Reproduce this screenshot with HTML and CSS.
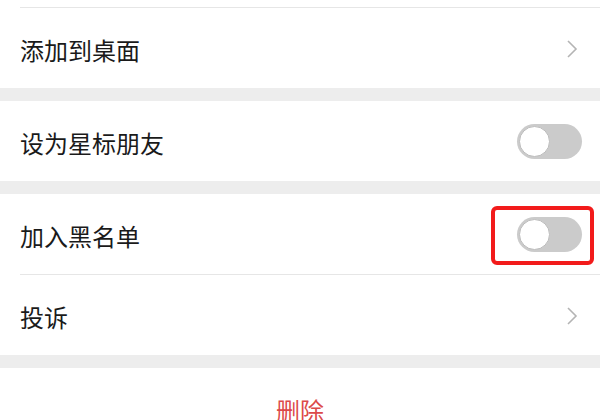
FILE: index.html
```html
<!DOCTYPE html>
<html lang="zh-CN">
<head>
    <meta charset="UTF-8">
    <meta name="viewport" content="width=device-width, initial-scale=1.0">
    <title>资料设置</title>
    <link rel="stylesheet" href="styles.css">
</head>
<body>
    <div class="group">
        <div class="stub"></div>
        <div class="cell">
            <div class="cell-body">
                <span class="label">添加到桌面</span>
                <svg class="arrow" width="12" height="20" viewBox="0 0 12 20"><path d="M2 2 L10 10 L2 18" fill="none" stroke="#b4b4b4" stroke-width="1.6"/></svg>
            </div>
        </div>
    </div>

    <div class="group">
        <div class="cell">
            <div class="cell-body first toggle-row">
                <span class="label">设为星标朋友</span>
                <span class="switch"><span class="knob"></span></span>
            </div>
        </div>
    </div>

    <div class="group">
        <div class="cell">
            <div class="cell-body first toggle-row">
                <span class="label">加入黑名单</span>
                <span class="switch marked">
                    <span class="knob"></span>
                    <span class="mark"></span>
                </span>
            </div>
        </div>
        <div class="cell">
            <div class="cell-body">
                <span class="label">投诉</span>
                <svg class="arrow" width="12" height="20" viewBox="0 0 12 20"><path d="M2 2 L10 10 L2 18" fill="none" stroke="#b4b4b4" stroke-width="1.6"/></svg>
            </div>
        </div>
    </div>

    <div class="group">
        <div class="danger">删除</div>
    </div>
</body>
</html>
```

FILE: styles.css
```css
/* Basic Styling */
body {
    margin: 0;
    padding: 0;
    background-color: #ededed;
    font-family: "Noto Sans CJK SC", "Noto Sans", sans-serif;
    color: #1a1a1a;
    overflow: hidden;
}

.group {
    background-color: #fff;
    margin-bottom: 13px;
}

.stub {
    height: 7px;
}

.cell {
    padding-left: 20px;
}

.cell-body {
    height: 80px;
    border-top: 1px solid #e6e6e6;
    padding-right: 22px;
    display: flex;
    align-items: center;
    justify-content: space-between;
}

.cell-body.first {
    border-top: none;
}

.cell-body.toggle-row {
    padding-right: 18px;
}

.label {
    font-size: 24px;
    line-height: 1;
    padding-top: 3px;
}

.arrow {
    display: block;
    margin-top: 2px;
}

/* Switch */
.switch {
    position: relative;
    width: 65px;
    height: 35px;
    border-radius: 18px;
    background-color: #cbcbcb;
    display: flex;
    align-items: center;
    padding-left: 2px;
    box-sizing: border-box;
}

.knob {
    width: 31px;
    height: 31px;
    border-radius: 50%;
    background-color: #fff;
    border: 1px solid #bdbdbd;
    box-sizing: border-box;
}

/* red annotation frame */
.mark {
    position: absolute;
    left: -26px;
    top: -11px;
    right: -12px;
    bottom: -13px;
    border: 4px solid #f21b1b;
    border-radius: 6px;
}

.danger {
    height: 80px;
    display: flex;
    align-items: center;
    justify-content: center;
    font-size: 24px;
    color: #dc4a4a;
    padding-top: 3px;
    box-sizing: border-box;
}
```
